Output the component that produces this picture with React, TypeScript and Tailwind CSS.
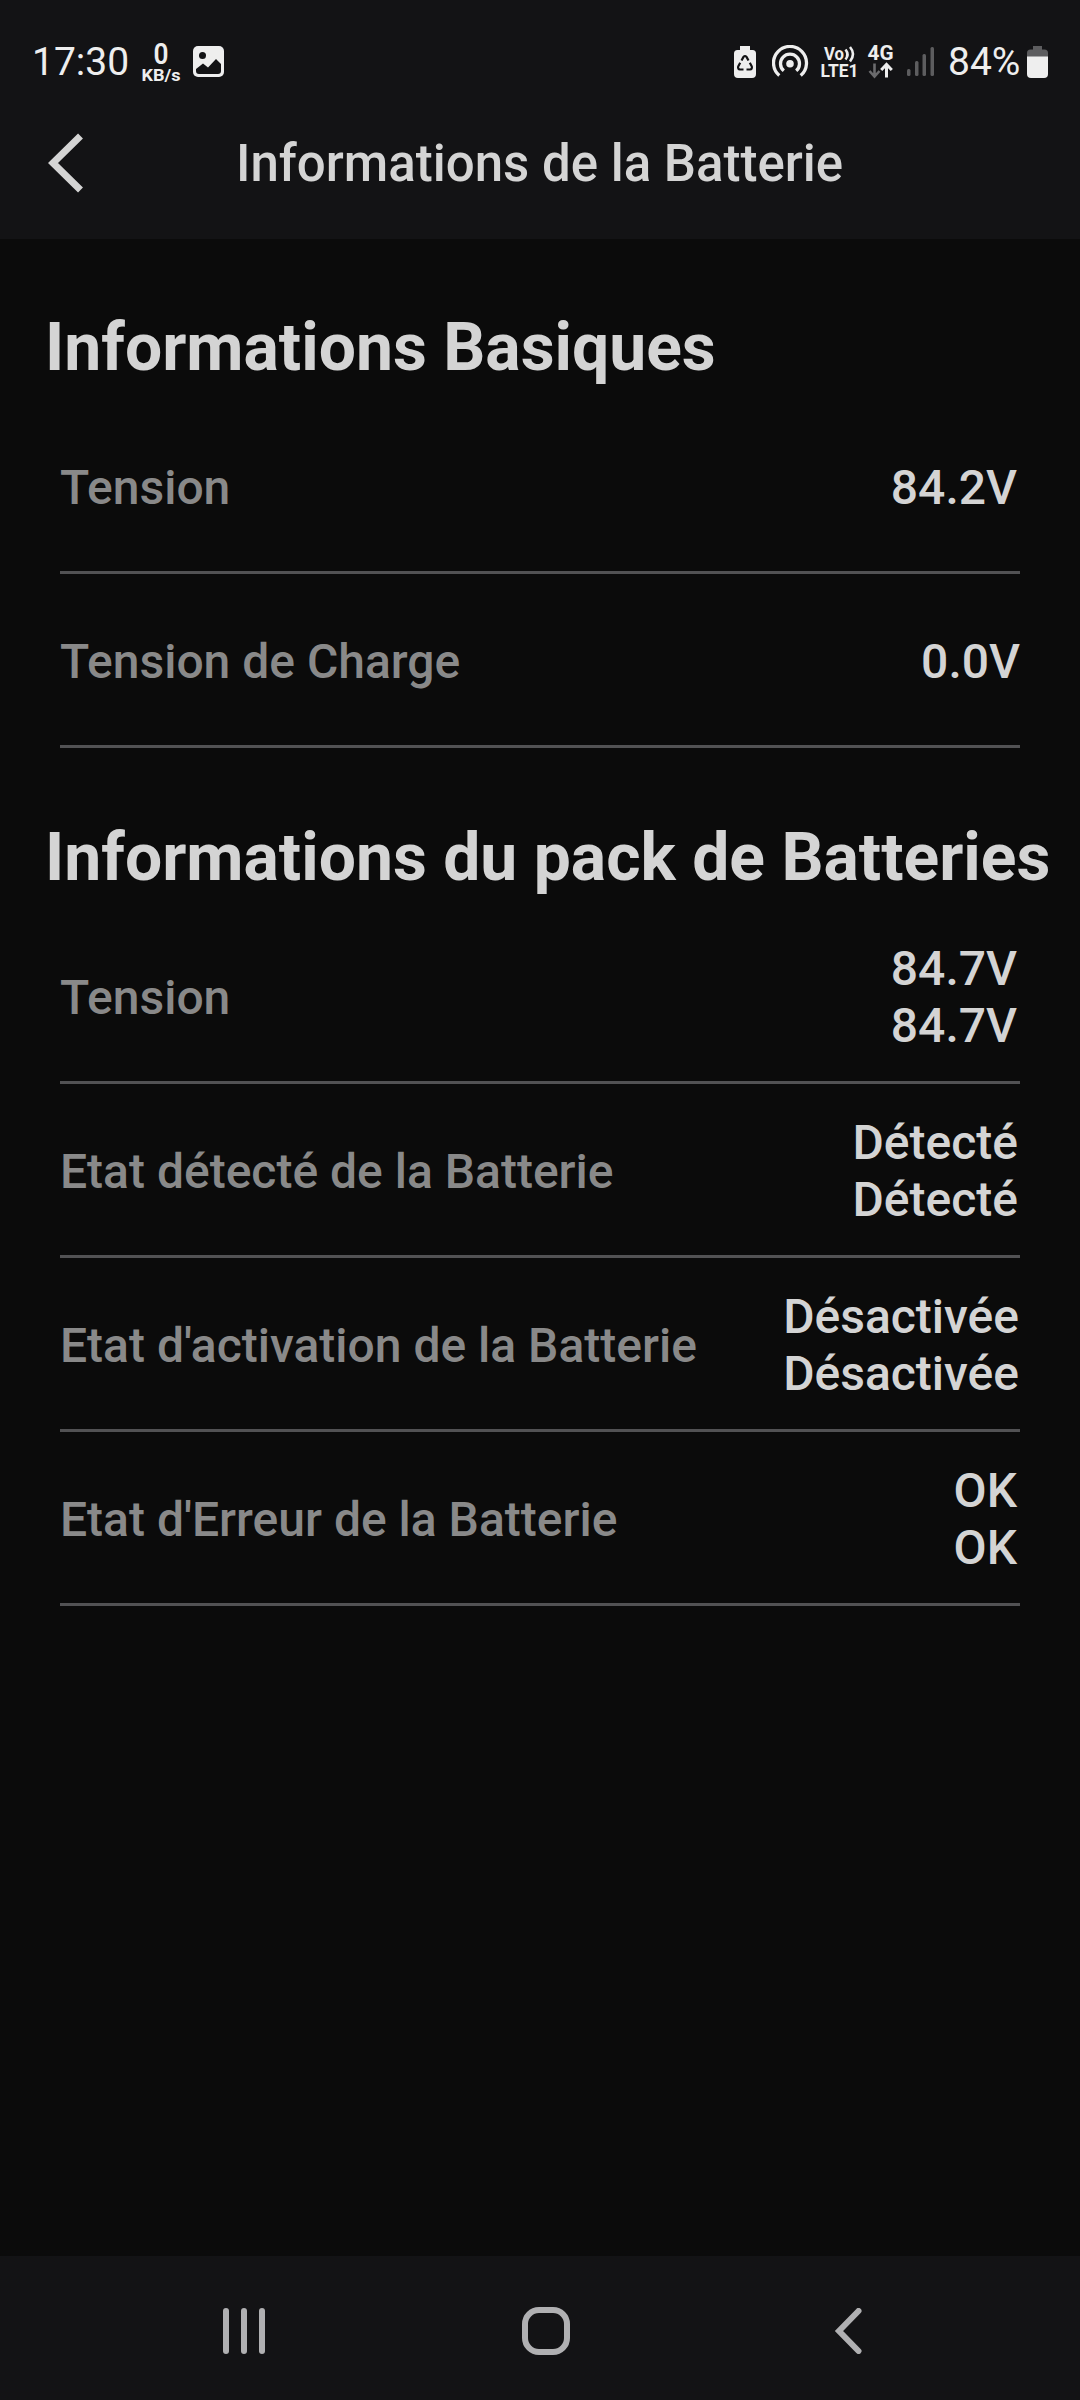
import type { ReactNode } from "react";

type Row = { label: string; values: string[]; inset?: string };

const BASIC_ROWS: Row[] = [
  { label: "Tension", values: ["84.2V"], inset: "pr-[3px]" },
  { label: "Tension de Charge", values: ["0.0V"] },
];

const PACK_ROWS: Row[] = [
  { label: "Tension", values: ["84.7V", "84.7V"], inset: "pr-[3px]" },
  { label: "Etat détecté de la Batterie", values: ["Détecté", "Détecté"], inset: "pr-[2px]" },
  { label: "Etat d'activation de la Batterie", values: ["Désactivée", "Désactivée"], inset: "pr-[1px]" },
  { label: "Etat d'Erreur de la Batterie", values: ["OK", "OK"], inset: "pr-[3px]" },
];

function StatusBar() {
  return (
    <div className="flex h-[88px] items-center pt-[35px] pr-[32px] pl-[32px] text-[#eeeeee]">
      <span className="w-[110px] pt-[2px] text-[39px] leading-none">17:30</span>

      {/* network speed */}
      <svg className="h-[40px] w-[38px] overflow-visible" viewBox="0 0 38 40" fill="#eeeeee">
        <text x="11.500" y="22" fontSize="29.500" fontWeight="600" textLength="15" lengthAdjust="spacingAndGlyphs">0</text>
        <text x="-0.500" y="38.500" fontSize="16.500" fontWeight="700" textLength="39" lengthAdjust="spacingAndGlyphs">KB/s</text>
      </svg>

      <svg className="ml-[13px] h-[31px] w-[31px]" viewBox="0 0 31 31">
        <rect width="31" height="31" rx="5" fill="#eeeeee" />
        <circle cx="9.500" cy="9.500" r="3.500" fill="#131315" />
        <path d="M3 23l7-5.500 5 4 8-8.500 5 5v7a3 3 0 0 1-3 3H6a3 3 0 0 1-3-3z" fill="#131315" />
      </svg>

      <div className="ml-auto flex items-center">
        {/* battery protection */}
        <svg className="h-[32px] w-[22px]" viewBox="0 0 22 32">
          <path d="M6 0h10v4h2.500a3.500 3.500 0 0 1 3.500 3.500V28a4 4 0 0 1-4 4H4a4 4 0 0 1-4-4V7.500A3.500 3.500 0 0 1 3.500 4H6z" fill="#eeeeee" />
          <g fill="none" stroke="#131315" strokeWidth="2.200" strokeLinejoin="round">
            <path d="M7.500 14.500l2-3.600q1.500-1.800 3 0l2 3.600" />
            <path d="M15.800 16.800l2 3.700q.6 2.700-1.800 3h-3.500" />
            <path d="M9.500 23.500H6q-2.400-.3-1.800-3l2-3.700" />
          </g>
        </svg>
        {/* hotspot */}
        <svg className="ml-[16px] h-[34px] w-[37px]" viewBox="0 0 37 34" fill="none" stroke="#eeeeee" strokeWidth="3.300">
          <path d="M7.300 30.500A16.500 16.500 0 1 1 28.700 30.500" />
          <path d="M11.800 25.800A9.500 9.500 0 1 1 24.200 25.800" />
          <circle cx="18" cy="18.700" r="3.800" fill="#eeeeee" stroke="none" />
        </svg>
        <svg className="ml-[12px] h-[34px] w-[38px] overflow-visible" viewBox="0 0 38 34">
          <text x="3" y="14.500" textLength="20" lengthAdjust="spacingAndGlyphs" fontSize="18" fontWeight="700" fill="#eeeeee">Vo</text>
          <path d="M24.500 4.500q4 5 0 10M29 2q6 7 0 14.500" fill="none" stroke="#eeeeee" strokeWidth="2.600" />
          <text x="-0.500" y="32" textLength="38" lengthAdjust="spacingAndGlyphs" fontSize="18" fontWeight="700" fill="#eeeeee">LTE1</text>
        </svg>
        <svg className="ml-[9px] h-[34px] w-[26px] overflow-visible" viewBox="0 0 26 34">
          <text x="-0.500" y="14.500" textLength="26" lengthAdjust="spacingAndGlyphs" fontSize="19.500" fontWeight="700" fill="#eeeeee">4G</text>
          <path d="M6.500 18.500v13M1.500 26l5 5.500 5-5.500" fill="none" stroke="#6b6b6d" strokeWidth="2.600" />
          <path d="M18.500 32.500V20M13.200 25l5.300-5.500 5.300 5.500" fill="none" stroke="#eeeeee" strokeWidth="3" />
        </svg>
        <svg className="ml-[13px] h-[30px] w-[27px]" viewBox="0 0 27 30" fill="#5d5d5f">
          <rect x="0" y="22" width="3.500" height="7" rx="1.500" />
          <rect x="8" y="14" width="3.500" height="15" rx="1.500" />
          <rect x="15.500" y="7" width="3.500" height="22" rx="1.500" />
          <rect x="23.500" y="0" width="3.500" height="29" rx="1.500" />
        </svg>
        <span className="ml-[14px] w-[79px] pt-[2px] text-[39px] leading-none">84%</span>
        <svg className="h-[32px] w-[21px]" viewBox="0 0 21 32">
          <path d="M6 0h9v3.500h2.500A3.500 3.500 0 0 1 21 7v5H0V7a3.500 3.500 0 0 1 3.500-3.500H6z" fill="#5d5d5f" />
          <path d="M0 10.500h21V28a4 4 0 0 1-4 4H4a4 4 0 0 1-4-4z" fill="#eeeeee" />
        </svg>
      </div>
    </div>
  );
}

function InfoRow({ label, values, inset = "" }: Row) {
  return (
    <div className="flex h-[174px] items-center justify-between border-b-[3px] border-[#525254] pt-[3px] text-[48px] font-medium leading-[57px]">
      <span className="text-[#898989]">{label}</span>
      <div className={`text-right text-[#d4d4d4] ${inset}`}>
        {values.map((value, i) => (
          <p key={i}>{value}</p>
        ))}
      </div>
    </div>
  );
}

function Section({ title, children }: { title: string; children: ReactNode }) {
  return (
    <section>
      <h2 className="h-[162px] pt-[71px] pl-[45px] text-[66px] font-bold leading-[78px] whitespace-nowrap text-[#d4d4d4]">
        {title}
      </h2>
      <div className="px-[60px]">{children}</div>
    </section>
  );
}

export default function App() {
  return (
    <div className="flex h-[2400px] w-[1080px] flex-col overflow-hidden bg-[#0b0b0b] font-[Roboto,sans-serif]">
      <header className="h-[239px] shrink-0 bg-[#131315]">
        <StatusBar />
        <div className="flex h-[150px] items-center pl-[48px]">
          <svg className="h-[60px] w-[36px]" viewBox="0 0 36 60" fill="none" stroke="#d4d4d4" strokeWidth="7">
            <path d="M32.500 3L5 30l27.500 27" />
          </svg>
          <h1 className="ml-[152px] text-[51px] font-medium leading-none text-[#d4d4d4]">Informations de la Batterie</h1>
        </div>
      </header>

      <main className="-mt-px flex-1">
        <Section title="Informations Basiques">
          {BASIC_ROWS.map((row) => (
            <InfoRow key={row.label} {...row} />
          ))}
        </Section>
        <Section title="Informations du pack de Batteries">
          {PACK_ROWS.map((row) => (
            <InfoRow key={row.label} {...row} />
          ))}
        </Section>
      </main>

      <nav className="flex h-[144px] shrink-0 items-center bg-[#131315] pt-[6px]">
        <svg className="ml-[222px] h-[46px] w-[44px]" viewBox="0 0 44 46" fill="#b0b0b2">
          <rect x="1" width="6" height="46" rx="3" />
          <rect x="19" width="6" height="46" rx="3" />
          <rect x="37" width="6" height="46" rx="3" />
        </svg>
        <svg className="ml-[256px] h-[48px] w-[48px]" viewBox="0 0 48 48" fill="none" stroke="#b0b0b2" strokeWidth="6">
          <rect x="3" y="3" width="42" height="42" rx="14" />
        </svg>
        <svg className="ml-[264px] h-[46px] w-[28px]" viewBox="0 0 28 46" fill="none" stroke="#b0b0b2" strokeWidth="6" strokeLinecap="round">
          <path d="M24.500 3L5 23l19.500 20" />
        </svg>
      </nav>
    </div>
  );
}
